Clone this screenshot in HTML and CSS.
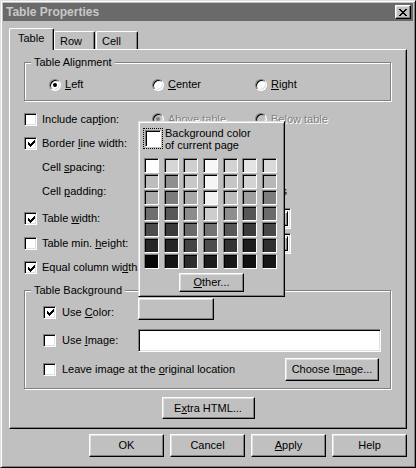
FILE: index.html
```html
<!DOCTYPE html>
<html>
<head>
<meta charset="utf-8">
<title>Table Properties</title>
<link rel="stylesheet" href="styles.css">
</head>
<body>
<div class="window">
  <div class="titlebar">
    <span class="title">Table Properties</span>
    <button class="close" type="button" aria-label="Close">
      <svg width="8" height="7" viewBox="0 0 8 7" shape-rendering="crispEdges"><path fill="#000" d="M0 0h2v1h-2z M6 0h2v1h-2z M1 1h2v1h-2z M5 1h2v1h-2z M2 2h4v1h-4z M3 3h2v1h-2z M2 4h4v1h-4z M1 5h2v1h-2z M5 5h2v1h-2z M0 6h2v1h-2z M6 6h2v1h-2z"/></svg>
    </button>
  </div>

  <div class="tabs">
    <div class="tab active">Table</div>
    <div class="tab tab-row">Row</div>
    <div class="tab tab-cell">Cell</div>
  </div>

  <div class="panel">
    <div class="group group-align">
      <div class="group-label">Table Alignment</div>
      <div class="radio-row">
        <label class="opt"><span class="radio checked"></span><span><u>L</u>eft</span></label>
        <label class="opt"><span class="radio"></span><span><u>C</u>enter</span></label>
        <label class="opt"><span class="radio"></span><span><u>R</u>ight</span></label>
      </div>
    </div>

    <div class="rows">
      <div class="row">
        <label class="check-label"><span class="check"></span><span>Include cap<u>t</u>ion:</span></label>
        <div class="caption-opts">
          <label class="opt disabled"><span class="radio checked"></span><span>Above table</span></label>
          <label class="opt disabled"><span class="radio"></span><span>Below table</span></label>
        </div>
      </div>
      <div class="row">
        <label class="check-label"><span class="check checked"><svg width="7" height="7" viewBox="0 0 7 7" shape-rendering="crispEdges"><path fill="#000" d="M6 0h1v1h-1z M5 1h2v1h-2z M0 2h1v1h-1z M4 2h3v1h-3z M0 3h2v1h-2z M3 3h3v1h-3z M0 4h5v1h-5z M1 5h3v1h-3z M2 6h1v1h-1z"/></svg></span><span>Border <u>l</u>ine width:</span></label>
        <div class="ctrl"><span class="num"></span></div>
      </div>
      <div class="row">
        <span class="plain-label">Cell <u>s</u>pacing:</span>
        <div class="ctrl"><span class="num"></span></div>
      </div>
      <div class="row">
        <span class="plain-label">Cell <u>p</u>adding:</span>
        <div class="ctrl"><span class="num"></span><span class="pixels">pixels</span></div>
      </div>
      <div class="row row-gap row-tall">
        <label class="check-label"><span class="check checked"><svg width="7" height="7" viewBox="0 0 7 7" shape-rendering="crispEdges"><path fill="#000" d="M6 0h1v1h-1z M5 1h2v1h-2z M0 2h1v1h-1z M4 2h3v1h-3z M0 3h2v1h-2z M3 3h3v1h-3z M0 4h5v1h-5z M1 5h3v1h-3z M2 6h1v1h-1z"/></svg></span><span>Table <u>w</u>idth:</span></label>
        <div class="ctrl"><span class="num"></span><span class="combo"><span class="combo-btn"></span></span></div>
      </div>
      <div class="row">
        <label class="check-label"><span class="check"></span><span>Table min. <u>h</u>eight:</span></label>
        <div class="ctrl"><span class="num"></span><span class="combo"><span class="combo-btn"></span></span></div>
      </div>
      <div class="row row-tall">
        <label class="check-label"><span class="check checked"><svg width="7" height="7" viewBox="0 0 7 7" shape-rendering="crispEdges"><path fill="#000" d="M6 0h1v1h-1z M5 1h2v1h-2z M0 2h1v1h-1z M4 2h3v1h-3z M0 3h2v1h-2z M3 3h3v1h-3z M0 4h5v1h-5z M1 5h3v1h-3z M2 6h1v1h-1z"/></svg></span><span>Equal column wi<u>d</u>ths</span></label>
      </div>
    </div>

    <div class="group group-bg">
      <div class="group-label">Table Background</div>
      <div class="bg-rows">
        <div class="bg-row bg-row1">
          <label class="check-label wide-gap shift"><span class="check checked"><svg width="7" height="7" viewBox="0 0 7 7" shape-rendering="crispEdges"><path fill="#000" d="M6 0h1v1h-1z M5 1h2v1h-2z M0 2h1v1h-1z M4 2h3v1h-3z M0 3h2v1h-2z M3 3h3v1h-3z M0 4h5v1h-5z M1 5h3v1h-3z M2 6h1v1h-1z"/></svg></span><span>Use <u>C</u>olor:</span></label>
          <button class="btn color-btn" type="button"></button>
        </div>
        <div class="bg-row bg-row2">
          <label class="check-label wide-gap"><span class="check"></span><span>Use <u>I</u>mage:</span></label>
          <span class="field"></span>
        </div>
        <div class="bg-row3">
          <label class="check-label wide-gap"><span class="check"></span><span>Leave image at the <u>o</u>riginal location</span></label>
          <button class="btn choose-btn" type="button">Choose I<u>m</u>age...</button>
        </div>
      </div>
    </div>

    <div class="extra-row">
      <button class="btn extra-btn" type="button">E<u>x</u>tra HTML...</button>
    </div>

    <div class="popup">
      <div class="pop-head">
        <span class="focus"><span class="cur-swatch"></span></span>
        <span class="pop-text">Background color<br>of current page</span>
      </div>
      <div class="palette">
        <span class="sw" style="background:#ffffff"></span><span class="sw" style="background:#d6d6d6"></span><span class="sw" style="background:#cfcfcf"></span><span class="sw" style="background:#f7f7f7"></span><span class="sw" style="background:#d3d3d3"></span><span class="sw" style="background:#e4e4e4"></span><span class="sw" style="background:#dadada"></span>
        <span class="sw" style="background:#bdbdbd"></span><span class="sw" style="background:#8f8f8f"></span><span class="sw" style="background:#c8c8c8"></span><span class="sw" style="background:#f5f5f5"></span><span class="sw" style="background:#c5c5c5"></span><span class="sw" style="background:#d3d3d3"></span><span class="sw" style="background:#b7b7b7"></span>
        <span class="sw" style="background:#a9a9a9"></span><span class="sw" style="background:#7c7c7c"></span><span class="sw" style="background:#a8a8a8"></span><span class="sw" style="background:#f0f0f0"></span><span class="sw" style="background:#bcbcbc"></span><span class="sw" style="background:#a0a0a0"></span><span class="sw" style="background:#7d7d7d"></span>
        <span class="sw" style="background:#6f6f6f"></span><span class="sw" style="background:#585858"></span><span class="sw" style="background:#8c8c8c"></span><span class="sw" style="background:#cdcdcd"></span><span class="sw" style="background:#8d8d8d"></span><span class="sw" style="background:#565656"></span><span class="sw" style="background:#6b6b6b"></span>
        <span class="sw" style="background:#4c4c4c"></span><span class="sw" style="background:#3b3b3b"></span><span class="sw" style="background:#696969"></span><span class="sw" style="background:#727272"></span><span class="sw" style="background:#575757"></span><span class="sw" style="background:#3b3b3b"></span><span class="sw" style="background:#484848"></span>
        <span class="sw" style="background:#262626"></span><span class="sw" style="background:#262626"></span><span class="sw" style="background:#444444"></span><span class="sw" style="background:#4d4d4d"></span><span class="sw" style="background:#353535"></span><span class="sw" style="background:#1e1e1e"></span><span class="sw" style="background:#2f2f2f"></span>
        <span class="sw" style="background:#080808"></span><span class="sw" style="background:#151515"></span><span class="sw" style="background:#2d2d2d"></span><span class="sw" style="background:#1d1d1d"></span><span class="sw" style="background:#171717"></span><span class="sw" style="background:#111111"></span><span class="sw" style="background:#161616"></span>
      </div>
      <button class="btn other-btn" type="button"><u>O</u>ther...</button>
    </div>
  </div>

  <div class="actions">
    <button class="btn action-btn" type="button">OK</button>
    <button class="btn action-btn" type="button">Cancel</button>
    <button class="btn action-btn" type="button"><u>A</u>pply</button>
    <button class="btn action-btn" type="button">Help</button>
  </div>
</div>
</body>
</html>
```

FILE: styles.css
```css
* { box-sizing: border-box; }

html, body {
  margin: 0;
  padding: 0;
}

body {
  font-family: "Liberation Sans", Arial, sans-serif;
  font-size: 11px;
  line-height: 13px;
  color: #000;
  background: #c0c0c0;
}

u { text-decoration: underline; text-underline-offset: 1px; }

.window {
  width: 416px;
  height: 468px;
  background: #c0c0c0;
  border: 1px solid;
  border-color: #dfdfdf #000 #000 #dfdfdf;
  box-shadow: inset 1px 1px #fff, inset -1px -1px #808080;
  padding: 2px;
  display: flex;
  flex-direction: column;
}

/* title bar */
.titlebar {
  height: 18px;
  flex: none;
  background: #6a6a6a;
  display: flex;
  align-items: center;
  justify-content: space-between;
  padding: 0 2px 0 3px;
}

.title {
  color: #c8c8c8;
  font-weight: bold;
  font-size: 12px;
}

.close {
  width: 16px;
  height: 14px;
  padding: 0;
  margin: 0;
  background: #c0c0c0;
  border: 1px solid;
  border-color: #fff #000 #000 #fff;
  box-shadow: inset -1px -1px #808080, inset 1px 1px #dfdfdf;
  display: flex;
  align-items: center;
  justify-content: center;
}

.close svg { display: block; }

/* tabs */
.tabs {
  flex: none;
  height: 21px;
  margin: 7px 0 0 6px;
  display: flex;
  align-items: flex-end;
}

.tab {
  height: 18px;
  background: #c0c0c0;
  border-top: 1px solid #fff;
  border-left: 1px solid #fff;
  border-right: 1px solid #000;
  box-shadow: inset -1px 0 #808080;
  border-radius: 2px 2px 0 0;
  padding: 3px 0 0 5px;
  line-height: 13px;
}

.tab.active {
  width: 45px;
  height: 22px;
  margin-bottom: -1px;
  padding-left: 8px;
  position: relative;
  z-index: 2;
}

.tab-row { width: 41px; }
.tab-cell { width: 42px; margin-left: 1px; }

/* panel */
.panel {
  flex: none;
  position: relative;
  height: 380px;
  margin: 0 6px;
  border: 1px solid;
  border-color: #fff #000 #000 #fff;
  box-shadow: inset -1px -1px #808080;
  padding: 0 15px 0 14px;
  display: flex;
  flex-direction: column;
}

.group {
  border: 1px solid #808080;
  box-shadow: inset 1px 1px #fff, 1px 1px #fff;
}

.group-label {
  width: fit-content;
  margin: -7px 0 0 6px;
  padding: 0 3px;
  background: #c0c0c0;
  line-height: 13px;
}

.group-align {
  margin-top: 12px;
  height: 39px;
  flex: none;
}

.radio-row {
  margin-top: 9px;
  padding-left: 24px;
  height: 13px;
  display: grid;
  grid-template-columns: 103px 103px auto;
  align-items: center;
}

.opt {
  display: flex;
  align-items: center;
  gap: 4px;
  white-space: nowrap;
}

.radio {
  width: 12px;
  height: 12px;
  flex: none;
  border-radius: 50%;
  background: #fff;
  border: 1px solid;
  border-color: #808080 #fff #fff #808080;
  box-shadow: inset 1px 1px #000, inset -1px -1px #dfdfdf;
  display: flex;
  align-items: center;
  justify-content: center;
}

.radio.checked::after {
  content: "";
  width: 4px;
  height: 4px;
  border-radius: 50%;
  background: #000;
}

.disabled { color: #808080; text-shadow: 1px 1px #fff; }
.disabled .radio { background: #c0c0c0; }
.disabled .radio.checked::after { background: #808080; }

/* rows */
.rows {
  margin-top: 6px;
  display: flex;
  flex-direction: column;
  flex: none;
}

.row {
  height: 24px;
  display: grid;
  grid-template-columns: 114px 1fr;
  align-items: center;
}

.row-gap { margin-top: 3px; }
.row-tall { height: 25px; }

.check-label {
  display: flex;
  align-items: center;
  gap: 5px;
  white-space: nowrap;
}

.wide-gap { gap: 6px; }
.shift { margin-top: 6px; }

.plain-label { padding-left: 18px; white-space: nowrap; }

.check {
  width: 13px;
  height: 13px;
  flex: none;
  background: #fff;
  border: 1px solid;
  border-color: #808080 #fff #fff #808080;
  box-shadow: inset 1px 1px #000, inset -1px -1px #dfdfdf;
  display: flex;
  align-items: center;
  justify-content: center;
}

.check svg { display: block; margin: 1px 0 0 1px; }

.caption-opts {
  display: grid;
  grid-template-columns: 103px auto;
  padding-left: 14px;
}

.ctrl {
  display: flex;
  align-items: center;
}

.num {
  width: 40px;
  height: 20px;
  background: #fff;
  border: 1px solid;
  border-color: #808080 #fff #fff #808080;
  box-shadow: inset 1px 1px #000, inset -1px -1px #dfdfdf;
}

.pixels { margin-left: 81px; }

.combo {
  width: 107px;
  height: 21px;
  margin-left: 6px;
  background: #fff;
  border: 1px solid;
  border-color: #808080 #fff #fff #808080;
  box-shadow: inset 1px 1px #000, inset -1px -1px #dfdfdf;
  padding: 2px;
  display: flex;
  align-items: center;
  justify-content: flex-end;
}

.combo-btn {
  width: 16px;
  height: 15px;
  background: #c0c0c0;
  border: 1px solid;
  border-color: #dfdfdf #000 #000 #dfdfdf;
  box-shadow: inset 1px 1px #fff, inset -1px -1px #808080;
}

/* background group */
.group-bg {
  margin-top: 10px;
  height: 99px;
  flex: none;
}

.bg-rows { padding-left: 18px; }

.bg-row {
  display: grid;
  grid-template-columns: 95px auto;
  align-items: center;
}

.bg-row1 { height: 22px; margin-top: 1px; }
.bg-row2 { height: 23px; margin-top: 9px; }

.bg-row3 {
  height: 23px;
  margin-top: 6px;
  display: flex;
  align-items: center;
}

.btn {
  font: inherit;
  color: #000;
  background: #c0c0c0;
  border: 1px solid;
  border-color: #fff #000 #000 #fff;
  box-shadow: inset -1px -1px #808080, inset 1px 1px #dfdfdf;
  padding: 0;
  margin: 0;
}

.color-btn { width: 76px; height: 22px; }

.field {
  width: 243px;
  height: 23px;
  background: #fff;
  border: 1px solid;
  border-color: #808080 #fff #fff #808080;
  box-shadow: inset 1px 1px #000, inset -1px -1px #dfdfdf;
}

.choose-btn {
  width: 94px;
  height: 23px;
  margin-left: auto;
  margin-right: 11px;
}

.extra-row {
  margin-top: 8px;
  display: flex;
  justify-content: center;
  padding-left: 1px;
}

.extra-btn { width: 93px; height: 22px; }

/* color popup */
.popup {
  position: absolute;
  left: 128px;
  top: 71px;
  width: 147px;
  height: 176px;
  z-index: 5;
  background: #c0c0c0;
  border: 1px solid;
  border-color: #dfdfdf #000 #000 #dfdfdf;
  box-shadow: inset 1px 1px #fff, inset -1px -1px #808080;
  padding: 1px;
}

.pop-head {
  display: flex;
  align-items: flex-start;
  margin: 5px 0 0 3px;
}

.focus {
  width: 20px;
  height: 21px;
  border: 1px dotted #000;
  padding: 1px;
  flex: none;
}

.cur-swatch {
  display: block;
  width: 100%;
  height: 100%;
  background: #fff;
  border: 1px solid;
  border-color: #808080 #fff #fff #808080;
  box-shadow: inset 1px 1px #000;
}

.pop-text {
  margin: -1px 0 0 2px;
  line-height: 12px;
  white-space: nowrap;
}

.palette {
  width: 133px;
  margin: 7px 0 0 4px;
  display: grid;
  grid-template-columns: repeat(7, 15px);
  grid-auto-rows: 15px;
  justify-content: space-between;
  row-gap: 1px;
}

.sw {
  display: block;
  border: 1px solid;
  border-color: #808080 #fff #fff #808080;
  box-shadow: inset 1px 1px #000;
}

.other-btn {
  display: block;
  width: 65px;
  height: 19px;
  margin: 4px auto 0;
}

/* dialog buttons */
.actions {
  flex: none;
  display: flex;
  justify-content: flex-end;
  gap: 6px;
  margin: 5px 6px 0 0;
}

.action-btn { width: 75px; height: 23px; }
```
